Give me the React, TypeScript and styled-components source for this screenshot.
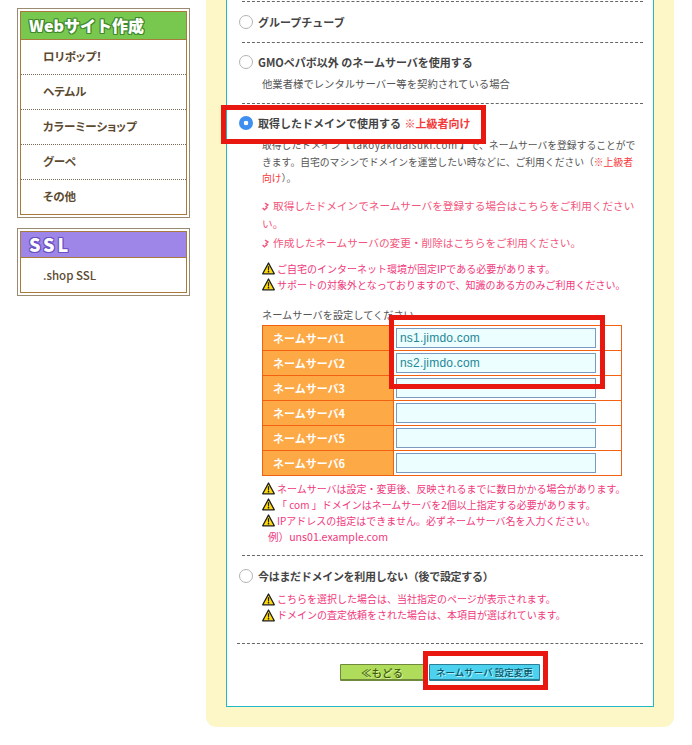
import React from "react";
import styled, { createGlobalStyle } from "styled-components";

const Global = createGlobalStyle`
  html, body { margin: 0; padding: 0; background: #fff; }
  body {
    font-family: "Noto Sans CJK JP", "Liberation Sans", sans-serif; font-size: 12px; color: #444;
  }
`;
const Page = styled.div`
  position: relative; width: 692px; height: 745px; overflow: hidden;
  display: flex; align-items: flex-start; gap: 16px; padding-left: 17px; box-sizing: border-box;
`;
const Side = styled.aside`
  width: 173px; padding-top: 8px; display: flex; flex-direction: column; gap: 10px; flex: none;
`;
const MenuFrame = styled.div`
  border: 1px solid #9a8a72; padding: 2px; background: #fff;
`;
const MenuInner = styled.div`
  border: 1px solid #a87a3c;
`;
const MenuHead = styled.div<{ $bg: string; $stroke: string; $h: number; $space?: number; $size?: number }>`
  height: ${p => p.$h}px; background: ${p => p.$bg}; border-bottom: 1px solid #a87a3c;
  padding: 0 0 2px 8px; display: flex; align-items: center; box-sizing: border-box;
  font: 900 ${p => p.$size ?? 16}px "Noto Sans CJK JP", sans-serif; color: #fff;
  letter-spacing: ${p => p.$space ?? 0}px;
  text-shadow: 1px 0 ${p => p.$stroke}, -1px 0 ${p => p.$stroke}, 0 1px ${p => p.$stroke}, 0 -1px ${p => p.$stroke},
    1px 1px ${p => p.$stroke}, -1px -1px ${p => p.$stroke}, 1px -1px ${p => p.$stroke}, -1px 1px ${p => p.$stroke};
`;
const MenuItem = styled.div<{ $plain?: boolean }>`
  height: 34px; display: flex; align-items: center; padding: 0 0 ${p => (p.$plain ? 1 : 3)}px 22px; box-sizing: border-box;
  font-size: 11.5px; font-weight: ${p => (p.$plain ? 500 : 700)}; color: #5c4a30;
  font-feature-settings: "palt" 1;
  & + & { height: 35px; border-top: 1px dotted #7a6a58; }
`;
const Main = styled.main`
  width: 468px; height: 727px; flex: none; box-sizing: border-box; background: #fdf6c6;
  padding: 0 20px 20px; border-radius: 0 0 10px 10px;
`;
const Card = styled.div`
  height: 707px; box-sizing: border-box; background: #fff;
  border: 1px solid #22b8c8; border-top: 0; padding: 1px 10px 0 10px;
`;
const Section = styled.section<{ $h: number; $wide?: boolean }>`
  height: ${p => p.$h}px; box-sizing: border-box; border-top: 1px dashed #666;
  margin-left: ${p => (p.$wide ? 0 : 5)}px;
`;
const OptionRow = styled.label<{ $top: number; $tight?: boolean }>`
  display: flex; align-items: center; gap: 5px; height: 16px; margin: ${p => p.$top}px 0 0 -3px;
  font-size: 11px; font-weight: 700; color: #444; line-height: 16px; white-space: nowrap;
  letter-spacing: ${p => (p.$tight ? "-0.3px" : "0")};
`;
const Radio = styled.span<{ $on?: boolean }>`
  width: 14px; height: 14px; flex: none; border-radius: 50%; box-sizing: border-box;
  border: ${p => (p.$on ? "0" : "1px solid #b4b4b4")};
  background: ${p => (p.$on ? "radial-gradient(circle, #fff 0 2px, #3f8ff0 2.6px)" : "#fff")};
`;
const Red = styled.span`color: #f53a3a;`;
const RedLead = styled(Red)`margin-left: 1px;`;
const Desc = styled.div<{ $top: number; $size: number }>`
  margin: ${p => p.$top}px 0 0 20px; font-size: ${p => p.$size}px; line-height: 16.5px; color: #555;
  white-space: nowrap;
`;
const Domain = styled.span`letter-spacing: .6px;`;
const LinkLine = styled.div<{ $top: number }>`
  margin: ${p => p.$top}px 0 0 20px; color: #f2557c; font-size: 10.65px; line-height: 18px;
  white-space: nowrap;
`;
const Clip = styled.svg`
  width: 7px; height: 9px; margin-right: 4px; vertical-align: -1px;
`;
const Warn = styled.div<{ $top?: number; $left?: number }>`
  display: flex; align-items: center; gap: 2px; height: 16px; white-space: nowrap;
  margin: ${p => p.$top ?? 0}px 0 0 ${p => p.$left ?? 20}px;
  color: #f0387c; font-size: 10px; line-height: 16px;
`;
const Example = styled(Warn)`margin-left: 26px; font-size: 10.6px;`;
const Prompt = styled.div`
  margin: 14px 0 0 20px; height: 16px; line-height: 16px; font-size: 10.2px; color: #555;
`;
const Table = styled.table`
  margin: 2px 0 0 20px; width: 360px; border-collapse: collapse; table-layout: fixed;
  border: 1px solid #f26012;
  th, td { border: 1px solid #f26012; padding: 0; height: 25px; box-sizing: border-box; }
  th {
    width: 131px; background: #fda946; color: #fff; text-align: left; padding-left: 10px;
    font-size: 11px; font-weight: 700;
  }
  td { padding-left: 2px; }
`;
const NsInput = styled.input`
  display: block; width: 200px; height: 20px; box-sizing: border-box; margin: 0;
  padding: 0 3px; background: #ecfeff; border: 1px solid #7a9ac0; border-radius: 0;
  font: 12px "Liberation Sans", sans-serif; letter-spacing: .2px; color: #1e8796; outline: none;
`;
const Buttons = styled.div`
  display: flex; justify-content: center; gap: 5px; padding-top: 20px;
`;
const Btn = styled.button<{ $bg: string; $line: string; $fg: string; $glow: string; $w: number; $size: number }>`
  width: ${p => p.$w}px; height: 17px; padding: 0; box-sizing: border-box; white-space: nowrap;
  background: ${p => p.$bg}; color: ${p => p.$fg};
  border: 1px solid ${p => p.$line}; border-bottom-width: 2px; border-radius: 1px;
  font: 500 ${p => p.$size}px/13px "Noto Sans CJK JP", sans-serif;
  text-shadow: 1px 1px 0 ${p => p.$glow};
`;
const Mark = styled.div<{ $x: number; $y: number; $w: number; $h: number }>`
  position: absolute; left: ${p => p.$x}px; top: ${p => p.$y}px;
  width: ${p => p.$w}px; height: ${p => p.$h}px; box-sizing: border-box;
  border: 5px solid #e81710; pointer-events: none;
`;

const WarnIcon = () => (
  <svg width="13" height="13" viewBox="0 0 13 13" style={{ flex: "none" }}>
    <path d="M6.5 1 L12.3 11.8 H.7 Z" fill="#fbd90c" stroke="#1c1c1c" strokeWidth="1.3" strokeLinejoin="round" />
    <path d="M5.8 4.2h1.4l-.2 4.2h-1z M5.8 9.1h1.4v1.3H5.8z" fill="#1c1c1c" />
  </svg>
);
const ClipIcon = () => (
  <Clip viewBox="0 0 7 9">
    <path d="M3 1.2 L6 3 L3.5 5 M.6 6 L2.4 7.8 L5.5 5.2" fill="none" stroke="#f2557c" strokeWidth="1.4" />
  </Clip>
);
const W = ({ children, top, left }: { children: React.ReactNode; top?: number; left?: number }) => (
  <Warn $top={top} $left={left}><WarnIcon />{children}</Warn>
);

const servers = ["ns1.jimdo.com", "ns2.jimdo.com", "", "", "", ""];

export default function App() {
  return (
    <Page>
      <Global />
      <Side>
        <MenuFrame>
          <MenuInner>
            <MenuHead $bg="#78c850" $stroke="#3f8a2c" $h={28}>Webサイト作成</MenuHead>
            <MenuItem>ロリポップ！</MenuItem>
            <MenuItem>ヘテムル</MenuItem>
            <MenuItem>カラーミーショップ</MenuItem>
            <MenuItem>グーペ</MenuItem>
            <MenuItem>その他</MenuItem>
          </MenuInner>
        </MenuFrame>
        <MenuFrame>
          <MenuInner>
            <MenuHead $bg="#9d86e8" $stroke="#6a52c4" $h={26} $space={3} $size={18}>SSL</MenuHead>
            <MenuItem $plain>.shop SSL</MenuItem>
          </MenuInner>
        </MenuFrame>
      </Side>
      <Main>
        <Card>
          <Section $h={41}>
            <OptionRow $top={12}><Radio />グループチューブ</OptionRow>
          </Section>
          <Section $h={61}>
            <OptionRow $top={11}><Radio />GMOペパボ以外 のネームサーバを使用する</OptionRow>
            <Desc $top={6} $size={10.35}>他業者様でレンタルサーバー等を契約されている場合</Desc>
          </Section>
          <Section $h={452}>
            <OptionRow $top={11}><Radio $on /><span>取得したドメインで使用する <RedLead>※上級者向け</RedLead></span></OptionRow>
            <Desc $top={6} $size={9.8}>
              取得したドメイン【 <Domain>takoyakidaisuki.com</Domain> 】で、ネームサーバを登録することがで<br />
              きます。自宅のマシンでドメインを運営したい時などに、ご利用ください（<Red>※上級者</Red><br />
              <Red>向け</Red>）。
            </Desc>
            <LinkLine $top={10}><ClipIcon />取得したドメインでネームサーバを登録する場合はこちらをご利用ください<br />い。</LinkLine>
            <LinkLine $top={1}><ClipIcon />作成したネームサーバの変更・削除はこちらをご利用ください。</LinkLine>
            <W top={9}>ご自宅のインターネット環境が固定IPである必要があります。</W>
            <W>サポートの対象外となっておりますので、知識のある方のみご利用ください。</W>
            <Prompt>ネームサーバを設定してください</Prompt>
            <Table>
              <tbody>
                {servers.map((v, i) => (
                  <tr key={i}>
                    <th>ネームサーバ{i + 1}</th>
                    <td><NsInput defaultValue={v} /></td>
                  </tr>
                ))}
              </tbody>
            </Table>
            <W top={5}>ネームサーバは設定・変更後、反映されるまでに数日かかる場合があります。</W>
            <W>「 com 」ドメインはネームサーバを2個以上指定する必要があります。</W>
            <W>IPアドレスの指定はできません。必ずネームサーバ名を入力ください。</W>
            <Example>例）uns01.example.com</Example>
          </Section>
          <Section $h={88}>
            <OptionRow $top={12} $tight><Radio />今はまだドメインを利用しない（後で設定する）</OptionRow>
            <W top={7} left={20}>こちらを選択した場合は、当社指定のページが表示されます。</W>
            <W left={20}>ドメインの査定依頼をされた場合は、本項目が選ばれています。</W>
          </Section>
          <Section $h={62} $wide>
            <Buttons>
              <Btn type="button" $bg="#b0dc5c" $line="#6f8a3a" $fg="#3e5c08" $glow="#d8f0a0" $w={84} $size={10.5}>≪もどる</Btn>
              <Btn type="button" $bg="#4cd2ee" $line="#2a7f96" $fg="#0e5668" $glow="#b0f0ff" $w={111} $size={9.5}>ネームサーバ 設定変更</Btn>
            </Buttons>
          </Section>
        </Card>
      </Main>
      <Mark $x={221} $y={105} $w={265} $h={39} />
      <Mark $x={389} $y={315} $w={216} $h={74} />
      <Mark $x={423} $y={651} $w={125} $h={39} />
    </Page>
  );
}
